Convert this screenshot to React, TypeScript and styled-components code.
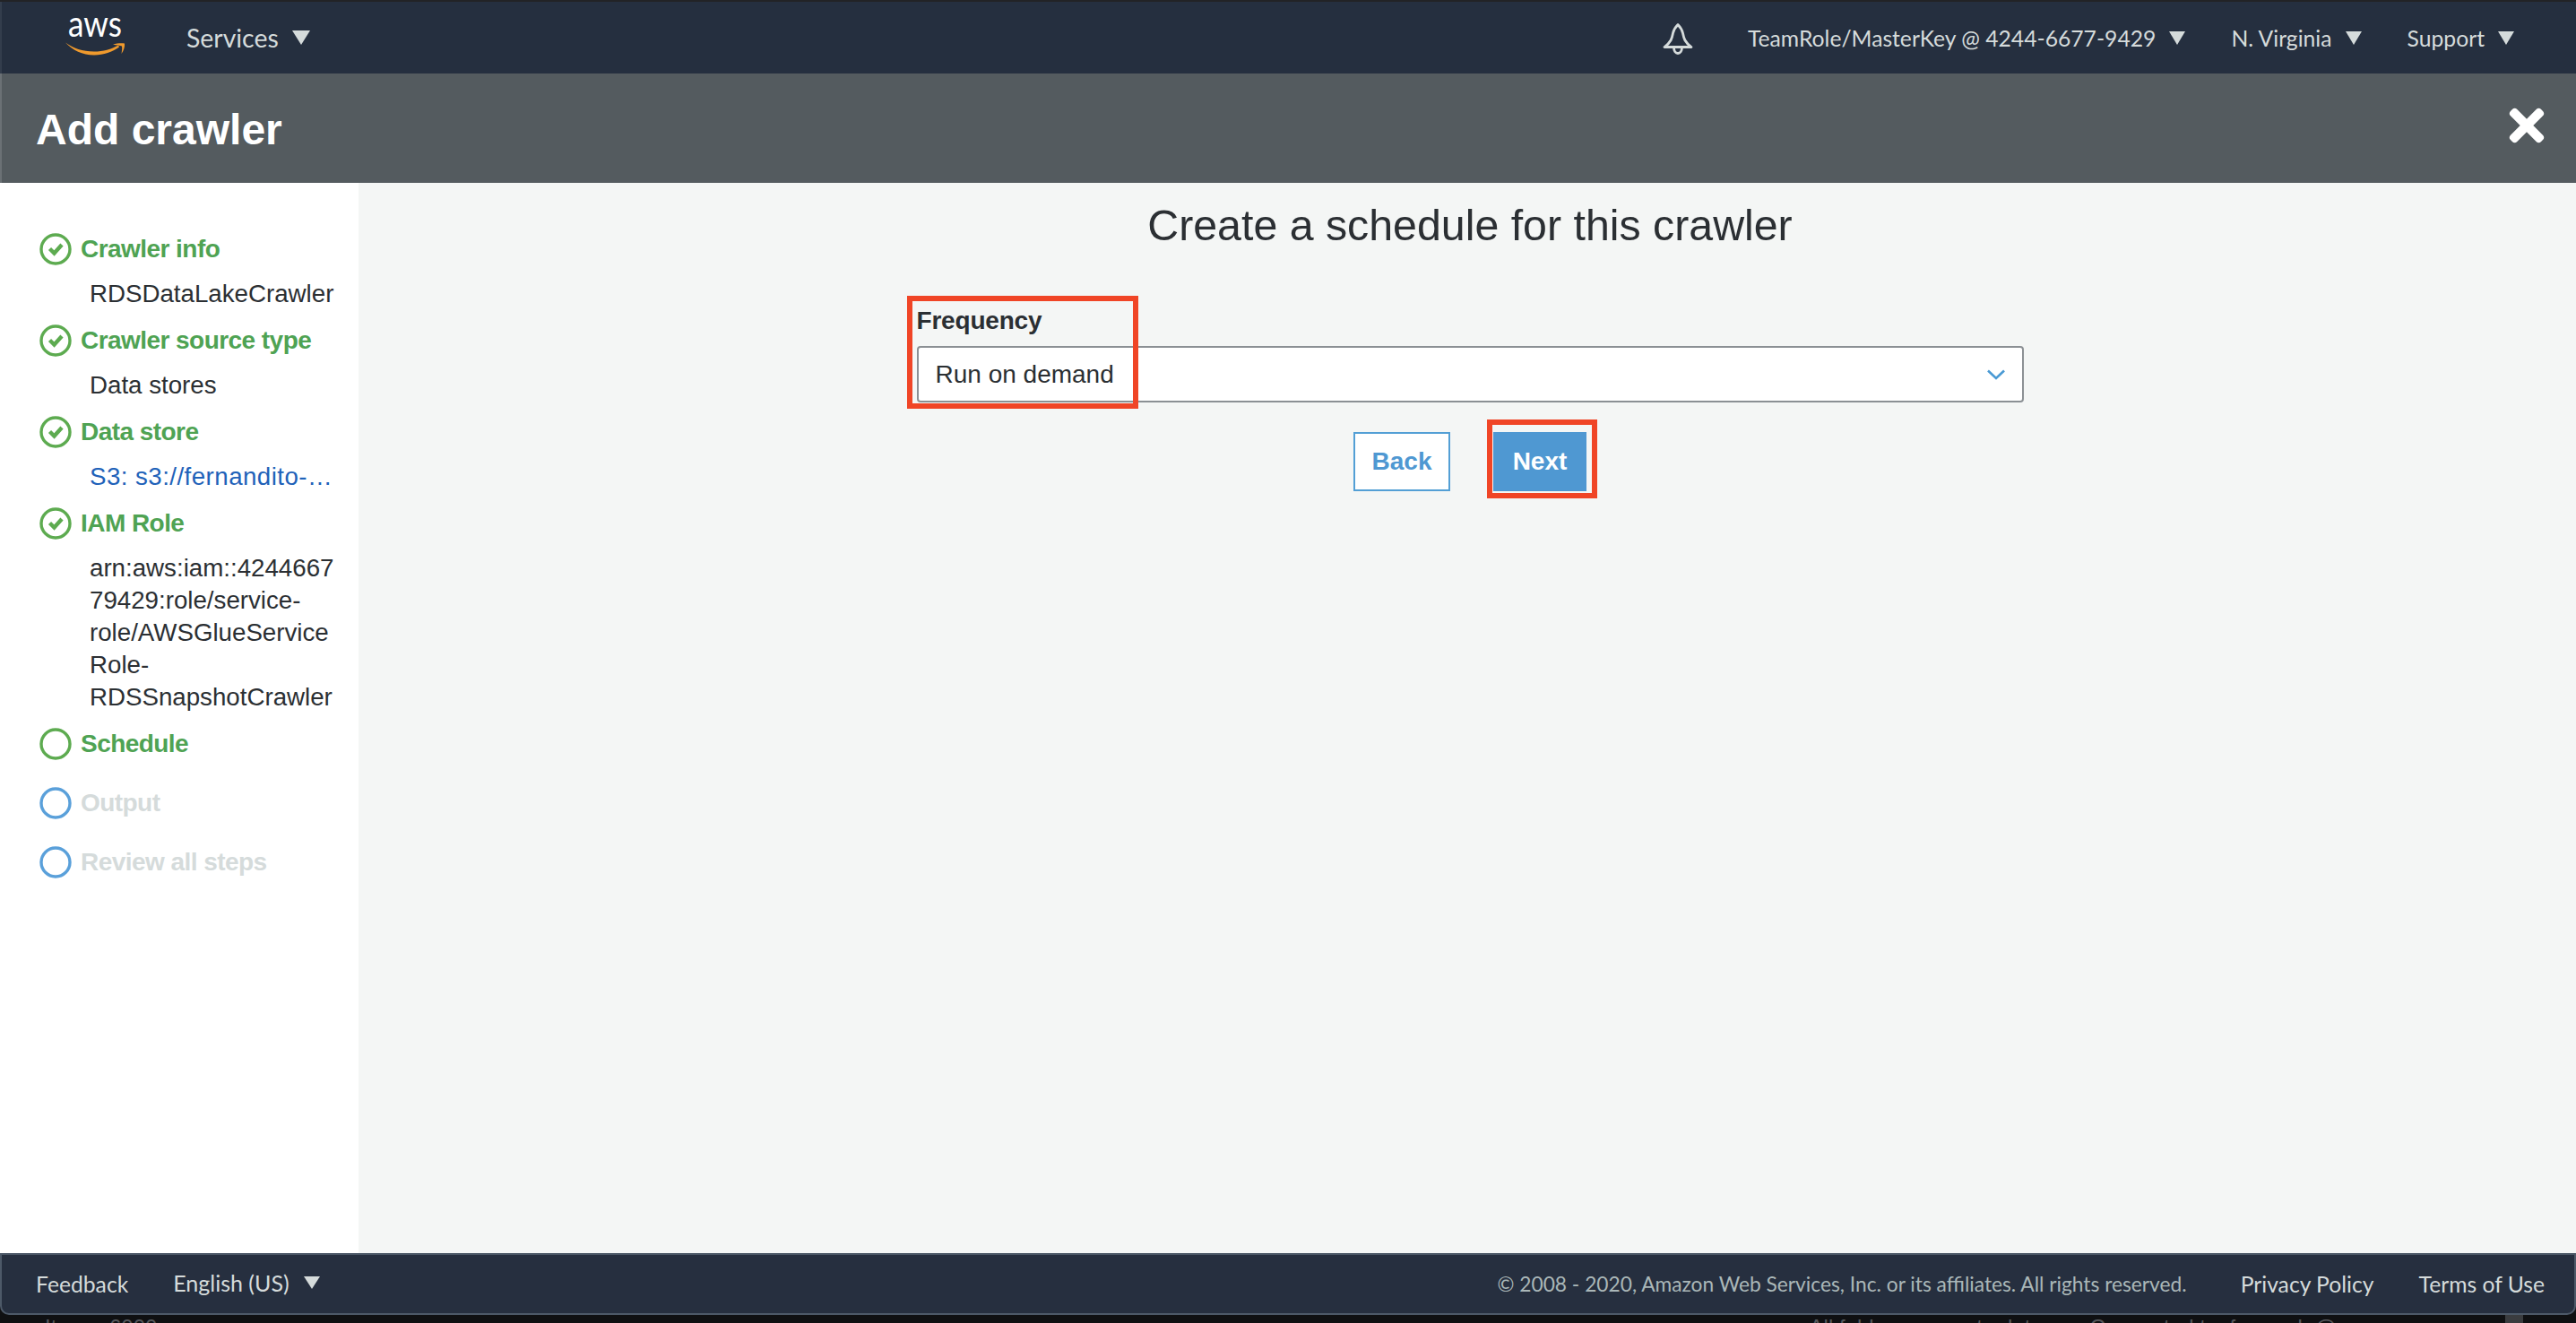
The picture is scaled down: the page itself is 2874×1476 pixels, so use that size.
import { FaTimes } from 'react-icons/fa';
import styled, { createGlobalStyle } from 'styled-components';

const GlobalStyle = createGlobalStyle`
  html, body {
    margin: 0;
    padding: 0;
    background: #0f1012;
  }
  * {
    box-sizing: border-box;
  }
`;

const sans = `"Liberation Sans", Arial, sans-serif`;
const ember = `Lato, "Open Sans", sans-serif`;

interface StepData {
  label: string;
  state: 'done' | 'current' | 'todo';
  detail?: string[];
  link?: string;
}

const steps: StepData[] = [
  { label: 'Crawler info', state: 'done', detail: ['RDSDataLakeCrawler'] },
  { label: 'Crawler source type', state: 'done', detail: ['Data stores'] },
  { label: 'Data store', state: 'done', link: 'S3: s3://fernandito-datalake/raw' },
  {
    label: 'IAM Role',
    state: 'done',
    detail: ['arn:aws:iam::4244667', '79429:role/service-', 'role/AWSGlueService', 'Role-', 'RDSSnapshotCrawler'],
  },
  { label: 'Schedule', state: 'current' },
  { label: 'Output', state: 'todo' },
  { label: 'Review all steps', state: 'todo' },
];

const AwsLogo = () => (
  <LogoSvg viewBox="0 0 72 48" width="72" height="48">
    <text x="4" y="24" fontFamily="Lato, sans-serif" fontSize="40" fill="#ffffff" textLength="60" lengthAdjust="spacingAndGlyphs">
      aws
    </text>
    <path d="M1 30.5C10 37 20 40.5 33 40.5C43 40.5 52 38 60 33.5L61 35.5C53 41 44 44.5 33 44.5C20 44.5 9 39 1 30.5Z" fill="#f09a2d" />
    <path d="M54 32.5C58 31.5 63 30.8 67 31.5C67.5 35 66 39.5 63.5 43C64 39.5 64.5 36.5 64 34.5C62 33.8 58 33.5 54 32.5Z" fill="#f09a2d" />
  </LogoSvg>
);

const BellIcon = () => (
  <svg viewBox="0 0 36 36" width="36" height="36" fill="none" stroke="#d5dbdb" strokeWidth="2.8">
    <path d="M18 1.5C15.5 4 13.5 6.5 12.5 11C11.5 16 11 20.5 3 26.5H33C25 20.5 24.5 16 23.5 11C22.5 6.5 20.5 4 18 1.5Z" strokeLinejoin="round" />
    <path d="M13.5 27C13.5 31 15.5 33.5 18 33.5C20.5 33.5 22.5 31 22.5 27" />
  </svg>
);

const StepIcon = ({ state }: { state: StepData['state'] }) => {
  const color = state === 'todo' ? '#5aa0da' : '#5dab50';
  return (
    <svg viewBox="0 0 36 36" width="36" height="36" fill="none">
      <circle cx="18" cy="18" r="16" stroke={color} strokeWidth="3.4" />
      {state === 'done' && <path d="M11.5 17.5L16.5 22.5L25 13" stroke={color} strokeWidth="4.4" />}
    </svg>
  );
};

export default function App() {
  return (
    <>
      <GlobalStyle />
      <Page>
        <TopEdge />
        <NavBar>
          <AwsLogo />
          <ServicesMenu>
            Services
            <Caret $w={10} $h={16} />
          </ServicesMenu>
          <NavRight>
            <BellSlot>
              <BellIcon />
            </BellSlot>
            <NavItem>
              TeamRole/MasterKey @ 4244-6677-9429
              <Caret $w={9} $h={15} />
            </NavItem>
            <NavItem>
              N. Virginia
              <Caret $w={9} $h={15} />
            </NavItem>
            <NavItem>
              Support
              <Caret $w={9} $h={15} />
            </NavItem>
          </NavRight>
        </NavBar>
        <TitleBar>
          <PageTitle>Add crawler</PageTitle>
          <CloseIcon />
        </TitleBar>
        <Body>
          <Sidebar>
            {steps.map((step) => (
              <Step key={step.label} $hasDetail={!!step.detail || !!step.link}>
                <StepHead $state={step.state}>
                  <StepIcon state={step.state} />
                  <span>{step.label}</span>
                </StepHead>
                {step.detail && (
                  <StepDetail>
                    {step.detail.map((line) => (
                      <div key={line}>{line}</div>
                    ))}
                  </StepDetail>
                )}
                {step.link && <StepLink>{step.link}</StepLink>}
              </Step>
            ))}
          </Sidebar>
          <Main>
            <FormColumn>
              <FormTitle>Create a schedule for this crawler</FormTitle>
              <Field>
                <FieldHighlight />
                <FieldLabel>Frequency</FieldLabel>
                <Select>
                  Run on demand
                  <svg viewBox="0 0 20 12" width="20" height="12" fill="none">
                    <path d="M1 1.5L10 10L19 1.5" stroke="#4a9ad4" strokeWidth="2.6" />
                  </svg>
                </Select>
              </Field>
              <Buttons>
                <BackButton>Back</BackButton>
                <NextWrap>
                  <NextButton>Next</NextButton>
                  <NextHighlight />
                </NextWrap>
              </Buttons>
            </FormColumn>
          </Main>
        </Body>
        <Footer>
          <FooterLeft>
            <FooterLink>Feedback</FooterLink>
            <Language>
              English (US)
              <Caret $w={9} $h={14} />
            </Language>
          </FooterLeft>
          <FooterRight>
            <Copyright>© 2008 - 2020, Amazon Web Services, Inc. or its affiliates. All rights reserved.</Copyright>
            <FooterLink>Privacy Policy</FooterLink>
            <FooterLink>Terms of Use</FooterLink>
          </FooterRight>
        </Footer>
        <StatusStrip>
          <span>Items: 6000</span>
          <StatusRight>
            <span>All folders are up to date.</span>
            <span>Connected to: fernando@amazon.com</span>
            <StatusBadge />
          </StatusRight>
        </StatusStrip>
      </Page>
    </>
  );
}

const Page = styled.div`
  width: 2874px;
  height: 1476px;
  display: flex;
  flex-direction: column;
  overflow: hidden;
  font-family: ${sans};
  color: #2b2f33;
  background: #0f1012;
`;

const TopEdge = styled.div`
  height: 2px;
  flex: none;
  background: #222326;
`;

const NavBar = styled.header`
  height: 80px;
  flex: none;
  display: flex;
  align-items: center;
  padding: 0 69px 0 70px;
  background: #252f3f;
  border-left: 2px solid #333d4c;
  font-family: ${ember};
  font-size: 24.7px;
  color: #d5dbdb;
`;

const LogoSvg = styled.svg`
  flex: none;
  margin-top: -2px;
`;

const Caret = styled.i<{ $w: number; $h: number }>`
  display: inline-block;
  width: 0;
  height: 0;
  border-left: ${(p) => p.$w}px solid transparent;
  border-right: ${(p) => p.$w}px solid transparent;
  border-top: ${(p) => p.$h}px solid #d5dbdb;
`;

const ServicesMenu = styled.div`
  display: flex;
  align-items: center;
  gap: 15px;
  margin-left: 64px;
  font-size: 28.4px;
`;

const NavRight = styled.div`
  display: flex;
  align-items: center;
  gap: 51px;
  margin-left: auto;
`;

const BellSlot = styled.div`
  display: flex;
  margin-right: 9px;
  margin-top: 4px;
`;

const NavItem = styled.div`
  display: flex;
  align-items: center;
  gap: 15px;
`;

const TitleBar = styled.div`
  height: 122px;
  flex: none;
  display: flex;
  align-items: center;
  justify-content: space-between;
  padding: 0 27px 0 38px;
  background: #545b5f;
  border-left: 2px solid #6b7175;
`;

const PageTitle = styled.h1`
  margin: 2px 0 0;
  font-size: 48px;
  font-weight: 700;
  color: #ffffff;
`;

const CloseIcon = styled(FaTimes)`
  font-size: 56px;
  color: #ffffff;
  margin-top: -6px;
`;

const Body = styled.div`
  flex: 1;
  min-height: 0;
  display: flex;
`;

const Sidebar = styled.nav`
  width: 400px;
  flex: none;
  padding: 56px 20px 0 44px;
  background: #ffffff;
`;

const Step = styled.div<{ $hasDetail: boolean }>`
  margin-bottom: ${(p) => (p.$hasDetail ? 16 : 30)}px;
`;

const StepHead = styled.div<{ $state: StepData['state'] }>`
  display: flex;
  align-items: center;
  gap: 10px;
  height: 36px;
  font-size: 28px;
  font-weight: 700;
  letter-spacing: -0.55px;
  white-space: nowrap;
  color: ${(p) => (p.$state === 'todo' ? '#d5dbdb' : '#4fa353')};
`;

const StepDetail = styled.div`
  margin: 14px 0 0 56px;
  font-size: 27.7px;
  line-height: 36px;
  white-space: nowrap;
  color: #2b2f33;
`;

const StepLink = styled.div`
  margin: 14px 0 0 56px;
  width: 272px;
  font-size: 27.7px;
  letter-spacing: 0.45px;
  line-height: 36px;
  white-space: nowrap;
  overflow: hidden;
  text-overflow: ellipsis;
  color: #1f62b9;
`;

const Main = styled.main`
  flex: 1;
  display: flex;
  justify-content: center;
  padding: 20px 0 0 6px;
  background: #f4f6f5;
`;

const FormColumn = styled.div`
  width: 1235px;
`;

const FormTitle = styled.h2`
  margin: 0;
  height: 56px;
  font-size: 48.3px;
  line-height: 54px;
  font-weight: 400;
  text-align: center;
  color: #2b2f33;
`;

const Field = styled.div`
  position: relative;
  margin-top: 61px;
`;

const FieldHighlight = styled.div`
  position: absolute;
  left: -11px;
  top: -11px;
  width: 258px;
  height: 126px;
  border: 6px solid #f04526;
  z-index: 1;
`;

const FieldLabel = styled.label`
  display: block;
  height: 36px;
  margin-bottom: 9px;
  font-size: 28px;
  line-height: 34px;
  font-weight: 700;
  letter-spacing: -0.2px;
`;

const Select = styled.div`
  height: 63px;
  display: flex;
  align-items: center;
  justify-content: space-between;
  padding: 0 19px 0 19px;
  background: #ffffff;
  border: 2px solid #8b9094;
  border-radius: 4px;
  font-size: 28px;
  color: #2b2f33;
`;

const Buttons = styled.div`
  display: flex;
  justify-content: center;
  gap: 48px;
  margin-top: 33px;
`;

const BackButton = styled.button`
  width: 108px;
  height: 66px;
  padding: 0;
  background: #ffffff;
  border: 2px solid #539fd5;
  border-radius: 0;
  font-family: ${sans};
  font-size: 28px;
  font-weight: 700;
  color: #4f98d2;
`;

const NextWrap = styled.div`
  position: relative;
`;

const NextButton = styled.button`
  display: block;
  width: 104px;
  height: 66px;
  padding: 0;
  background: #4f98d2;
  border: none;
  border-radius: 0;
  font-family: ${sans};
  font-size: 28px;
  font-weight: 700;
  color: #ffffff;
`;

const NextHighlight = styled.div`
  position: absolute;
  left: -7px;
  top: -14px;
  width: 123px;
  height: 88px;
  border: 6px solid #f04526;
`;

const Footer = styled.footer`
  height: 69px;
  flex: none;
  display: flex;
  align-items: center;
  justify-content: space-between;
  padding: 0 33px 0 38px;
  background: #262f3f;
  border: 2px solid #4d5968;
  border-radius: 0 0 10px 10px;
  font-family: ${ember};
  color: #d5dbdb;
`;

const FooterLeft = styled.div`
  display: flex;
  align-items: center;
  gap: 50px;
`;

const FooterRight = styled.div`
  display: flex;
  align-items: center;
  gap: 50px;
`;

const FooterLink = styled.span`
  font-size: 24.7px;
`;

const Language = styled.span`
  display: flex;
  align-items: center;
  gap: 16px;
  font-size: 25px;
  margin-top: -3px;
`;

const Copyright = styled.span`
  margin-right: 10px;
  font-size: 22.75px;
  color: #aab7b8;
`;

const StatusStrip = styled.div`
  height: 9px;
  flex: none;
  display: flex;
  justify-content: space-between;
  padding: 0 59px 0 50px;
  overflow: hidden;
  font-family: ${sans};
  font-size: 24px;
  line-height: 28px;
  color: #55585c;
`;

const StatusRight = styled.div`
  display: flex;
  gap: 46px;
`;

const StatusBadge = styled.div`
  width: 20px;
  height: 9px;
  margin-left: 5px;
  background: #3a3c3f;
`;
